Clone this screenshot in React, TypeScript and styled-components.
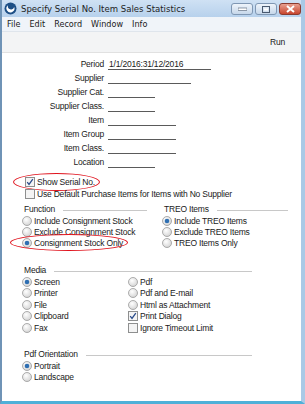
import styled, { createGlobalStyle } from "styled-components"

const Global = createGlobalStyle`
    body {
        margin: 0;
        background: #ffffff;
        font-family: "Liberation Sans", Arial, sans-serif;
    }
`

const fields = [
    { label: "Period", value: "1/1/2016:31/12/2016", width: 102 },
    { label: "Supplier", value: "", width: 82 },
    { label: "Supplier Cat.", value: "", width: 46 },
    { label: "Supplier Class.", value: "", width: 46 },
    { label: "Item", value: "", width: 67 },
    { label: "Item Group", value: "", width: 67 },
    { label: "Item Class.", value: "", width: 67 },
    { label: "Location", value: "", width: 46 },
]

const Radio = ({ on }: { on?: boolean }) => (
    <svg width="10" height="10" viewBox="0 0 10 10">
        <defs>
            <radialGradient id={on ? "rgOn" : "rgOff"} cx="40%" cy="35%" r="70%">
                <stop offset="0%" stopColor="#ffffff" />
                <stop offset="100%" stopColor="#d2d2d2" />
            </radialGradient>
        </defs>
        <circle cx="5" cy="5" r="4.5" fill={`url(#${on ? "rgOn" : "rgOff"})`} stroke="#9a9a9a" strokeWidth="0.8" />
        {on && <circle cx="5" cy="5" r="2.3" fill="#2f6fb2" />}
    </svg>
)

const Check = ({ on }: { on?: boolean }) => (
    <svg width="10" height="10" viewBox="0 0 10 10">
        <rect x="0.5" y="0.5" width="9" height="9" fill="#f4f4f4" stroke="#8e8f8f" strokeWidth="1" />
        {on && <path d="M2.2 5.2 L4 7.4 L7.8 2.2" fill="none" stroke="#2b4d8c" strokeWidth="1.3" />}
    </svg>
)

const App = () => {
    return (
        <>
            <Global />
            <Window>
                <TitleBar>
                    <AppIcon viewBox="0 0 13 13">
                        <circle cx="6.5" cy="6.5" r="6" fill="#1d4f86" />
                        <path d="M4 3.2 A4 4 0 1 0 10.2 5 A3 3 0 1 1 4 3.2 Z" fill="#ffffff" />
                    </AppIcon>
                    <Title>Specify Serial No. Item Sales Statistics</Title>
                    <Controls>
                        <CtrlButton>
                            <svg width="9" height="4"><rect x="0" y="1" width="9" height="2.5" fill="#ffffff" stroke="#4a5a70" strokeWidth="0.6" /></svg>
                        </CtrlButton>
                        <CtrlButton>
                            <svg width="8" height="7"><rect x="0.5" y="0.5" width="7" height="6" fill="none" stroke="#4a5a70" strokeWidth="1" /><rect x="2" y="2.5" width="4" height="2" fill="#ffffff" /></svg>
                        </CtrlButton>
                        <CloseButton>
                            <svg width="9" height="8"><path d="M1 1 L8 7 M8 1 L1 7" stroke="#ffffff" strokeWidth="2" /></svg>
                        </CloseButton>
                    </Controls>
                </TitleBar>
                <MenuBar>
                    <span>File</span>
                    <span>Edit</span>
                    <span>Record</span>
                    <span>Window</span>
                    <span>Info</span>
                </MenuBar>
                <ToolBar>
                    <span>Run</span>
                </ToolBar>
                <Content>
                    <FieldGrid>
                        {fields.map(f => (
                            <FieldRow key={f.label}>
                                <Label>{f.label}</Label>
                                <Field style={{ width: f.width }}>{f.value}</Field>
                            </FieldRow>
                        ))}
                    </FieldGrid>

                    <Checks>
                        <Option>
                            <Check on />
                            <span>Show Serial No.</span>
                            <Mark $w={85} />
                        </Option>
                        <Option>
                            <Check />
                            <span>Use Default Purchase Items for Items with No Supplier</span>
                        </Option>
                    </Checks>

                    <Groups $top={3}>
                        <Group $w={125}>
                            <Header>Function</Header>
                            <Option $h={11}><Radio /><span>Include Consignment Stock</span></Option>
                            <Option $h={11}><Radio /><span>Exclude Consignment Stock</span></Option>
                            <Option $h={11}>
                                <Radio on />
                                <span>Consignment Stock Only</span>
                                <Mark $w={116} />
                            </Option>
                        </Group>
                        <Group $w={126} $left={15}>
                            <Header>TREO Items</Header>
                            <Option $h={11}><Radio on /><span>Include TREO Items</span></Option>
                            <Option $h={11}><Radio /><span>Exclude TREO Items</span></Option>
                            <Option $h={11}><Radio /><span>TREO Items Only</span></Option>
                        </Group>
                    </Groups>

                    <Section $top={16} $w={230}>
                        <Header>Media</Header>
                        <TwoCols>
                            <div>
                                <Option $h={11.5}><Radio on /><span>Screen</span></Option>
                                <Option $h={11.5}><Radio /><span>Printer</span></Option>
                                <Option $h={11.5}><Radio /><span>File</span></Option>
                                <Option $h={11.5}><Radio /><span>Clipboard</span></Option>
                                <Option $h={11.5}><Radio /><span>Fax</span></Option>
                            </div>
                            <div>
                                <Option $h={11.5}><Radio /><span>Pdf</span></Option>
                                <Option $h={11.5}><Radio /><span>Pdf and E-mail</span></Option>
                                <Option $h={11.5}><Radio /><span>Html as Attachment</span></Option>
                                <Option $h={11.5}><Check on /><span>Print Dialog</span></Option>
                                <Option $h={11.5}><Check /><span>Ignore Timeout Limit</span></Option>
                            </div>
                        </TwoCols>
                    </Section>

                    <Section $top={14.5} $w={230}>
                        <Header>Pdf Orientation</Header>
                        <Option $h={11}><Radio on /><span>Portrait</span></Option>
                        <Option $h={11}><Radio /><span>Landscape</span></Option>
                    </Section>
                </Content>
            </Window>
        </>
    )
}

export default App

const Window = styled.div`
    width: 305px;
    height: 404px;
    box-sizing: border-box;
    display: flex;
    flex-direction: column;
    background: #ffffff;
    border-left: 2px solid #6f93b6;
    border-right: 4px solid #aac9e6;
    border-bottom: 3px solid #4fb0d8;
    overflow: hidden;
    font-size: 8.5px;
    letter-spacing: -0.2px;
    color: #1a1a1a;
`

const TitleBar = styled.div`
    height: 17px;
    flex: none;
    display: flex;
    align-items: center;
    padding-left: 2px;
    background: linear-gradient(#cfe1f4, #b7d1ec);
`

const AppIcon = styled.svg`
    width: 13px;
    height: 13px;
    flex: none;
`

const Title = styled.div`
    margin-left: 4px;
    font-family: "DejaVu Sans Condensed", "Liberation Sans", sans-serif;
    font-size: 9.5px;
    letter-spacing: 0;
    color: #1e1e1e;
    white-space: nowrap;
`

const Controls = styled.div`
    margin-left: auto;
    display: flex;
    gap: 2px;
    align-self: flex-start;
    margin-top: 3px;
`

const CtrlButton = styled.div`
    width: 22px;
    height: 12px;
    border: 1px solid #7f97b3;
    border-radius: 3px;
    background: linear-gradient(#eef4fb, #c6d7ea);
    display: flex;
    align-items: center;
    justify-content: center;
    box-sizing: border-box;
`

const CloseButton = styled(CtrlButton)`
    width: 22px;
    border-color: #8a3a2e;
    background: linear-gradient(#e8a090, #c8452e);
`

const MenuBar = styled.div`
    height: 14px;
    flex: none;
    display: flex;
    align-items: center;
    padding-left: 5px;
    background: #f0f4f9;
    font-family: "DejaVu Sans Condensed", "Liberation Sans", sans-serif;
    font-size: 9px;
    letter-spacing: 0;

    > span { margin-right: 9px; }
`

const ToolBar = styled.div`
    height: 22px;
    flex: none;
    display: flex;
    align-items: center;
    justify-content: flex-end;
    padding-right: 16px;
    background: #f3f4f5;
    border-top: 1px solid #dfe5ec;
    border-bottom: 1px solid #e1e1e1;
    box-sizing: border-box;
`

const Content = styled.div`
    padding-top: 4px;
    display: flex;
    flex-direction: column;
`

const FieldGrid = styled.div`
    display: flex;
    flex-direction: column;
`

const FieldRow = styled.div`
    height: 14px;
    display: grid;
    grid-template-columns: 102px auto;
    column-gap: 4px;
    align-items: center;
`

const Label = styled.div`
    text-align: right;
    white-space: nowrap;
`

const Field = styled.div`
    height: 10px;
    line-height: 10px;
    border-bottom: 1px solid #5a5a5a;
    padding-left: 1px;
    white-space: nowrap;
`

const Checks = styled.div`
    margin-top: 7px;
    padding-left: 23px;
    display: flex;
    flex-direction: column;
`

const Option = styled.div<{ $h?: number }>`
    position: relative;
    height: ${p => p.$h ?? 12}px;
    display: flex;
    align-items: center;
    gap: 2px;
    white-space: nowrap;

    > svg { flex: none; }
`

const Mark = styled.div<{ $w: number }>`
    position: absolute;
    left: -12px;
    top: -3px;
    bottom: -3px;
    width: ${p => p.$w}px;
    border: 1px solid #e0141e;
    border-radius: 50%;
    pointer-events: none;
`

const Groups = styled.div<{ $top: number }>`
    margin-top: ${p => p.$top}px;
    padding-left: 20px;
    display: flex;
`

const Group = styled.div<{ $w: number; $left?: number }>`
    width: ${p => p.$w}px;
    margin-left: ${p => p.$left ?? 0}px;
    display: flex;
    flex-direction: column;
`

const Section = styled.div<{ $top: number; $w: number }>`
    margin-top: ${p => p.$top}px;
    margin-left: 20px;
    width: ${p => p.$w}px;
    display: flex;
    flex-direction: column;
`

const Header = styled.div`
    height: 12px;
    display: flex;
    align-items: center;
    gap: 8px;
    padding-left: 2px;
    white-space: nowrap;

    &::after {
        content: "";
        flex: 1;
        border-top: 1px solid #c8c8c8;
        margin-top: 3px;
    }
`

const TwoCols = styled.div`
    display: grid;
    grid-template-columns: 106px auto;
`
